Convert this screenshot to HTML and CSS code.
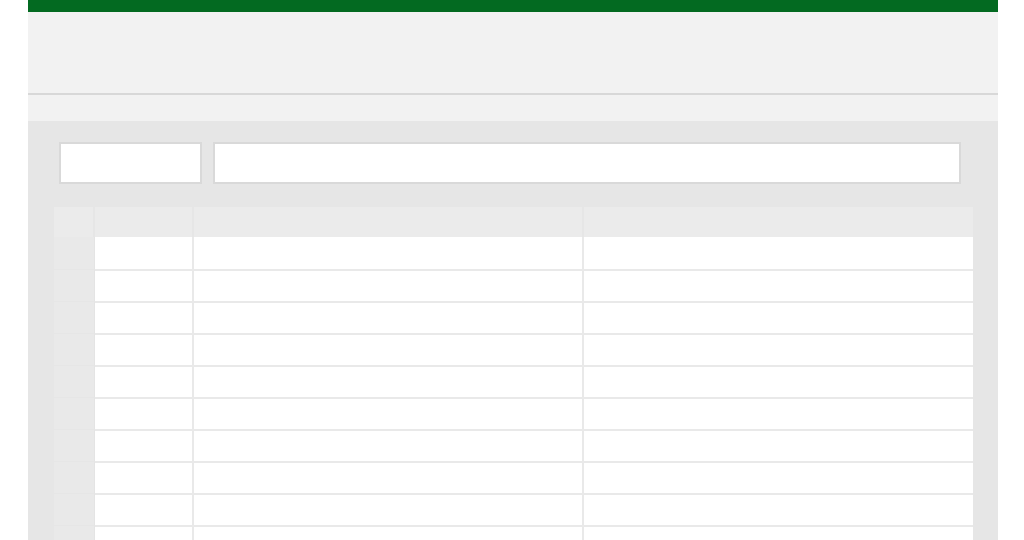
FILE: index.html
```html
<!DOCTYPE html>
<html>
<head>
<meta charset="utf-8">
<link rel="stylesheet" href="styles.css">
</head>
<body>
<div class="app">
  <div class="titlebar"></div>
  <div class="ribbon"></div>
  <div class="strip"></div>
  <div class="main">
    <div class="formula-row">
      <div class="namebox"></div>
      <div class="formula"></div>
    </div>
    <div class="sheet">
      <div class="cell corner"></div><div class="cell colhead"></div><div class="cell colhead"></div><div class="cell colhead last"></div>
      <div class="cell rowhead first"></div><div class="cell first"></div><div class="cell first"></div><div class="cell first last"></div>
      <div class="cell rowhead"></div><div class="cell"></div><div class="cell"></div><div class="cell last"></div>
      <div class="cell rowhead"></div><div class="cell"></div><div class="cell"></div><div class="cell last"></div>
      <div class="cell rowhead"></div><div class="cell"></div><div class="cell"></div><div class="cell last"></div>
      <div class="cell rowhead"></div><div class="cell"></div><div class="cell"></div><div class="cell last"></div>
      <div class="cell rowhead"></div><div class="cell"></div><div class="cell"></div><div class="cell last"></div>
      <div class="cell rowhead"></div><div class="cell"></div><div class="cell"></div><div class="cell last"></div>
      <div class="cell rowhead"></div><div class="cell"></div><div class="cell"></div><div class="cell last"></div>
      <div class="cell rowhead"></div><div class="cell"></div><div class="cell"></div><div class="cell last"></div>
      <div class="cell rowhead"></div><div class="cell"></div><div class="cell"></div><div class="cell last"></div>
    </div>
  </div>
</div>
</body>
</html>
```

FILE: styles.css
```css
* { box-sizing: border-box; }
html, body { margin: 0; padding: 0; background: #ffffff; overflow: hidden; height: 540px; font-family: "Liberation Sans", Arial, sans-serif; }
.app {
  width: 970px;
  margin-left: 28px;
  height: 540px;
  display: flex;
  flex-direction: column;
}
.titlebar { height: 12px; background: #036a21; flex: none; }
.ribbon { height: 83px; background: #f2f2f2; border-bottom: 2px solid #d8d8d8; flex: none; }
.strip { height: 26px; background: #f2f2f2; flex: none; }
.main {
  flex: 1;
  background: #e6e6e6;
  padding: 21px 25px 0 26px;
  overflow: hidden;
}
.formula-row {
  display: flex;
  gap: 11px;
  padding: 0 12px 0 5px;
  height: 42px;
}
.namebox, .formula {
  background: #ffffff;
  border: 2px solid #d9d9d9;
  height: 42px;
}
.namebox { width: 143px; flex: none; }
.formula { flex: 1; }
.sheet {
  margin-top: 23px;
  display: grid;
  grid-template-columns: 41px 99px 390px 389px;
  grid-auto-rows: 32px;
  grid-template-rows: 30px;
}
.cell {
  background: #ffffff;
  border-right: 2px solid #e9e9e9;
  border-top: 2px solid #e9e9e9;
}
.cell.first { border-top: none; }
.cell.last { border-right: none; }
.corner, .colhead {
  background: #ebebeb;
  border-top: none;
  border-right: 2px solid #e6e6e6;
}
.rowhead {
  background: #e9e9e9;
  border-right: 1px solid #e4e4e4;
  border-top: 1px solid #e6e6e6;
}
```
